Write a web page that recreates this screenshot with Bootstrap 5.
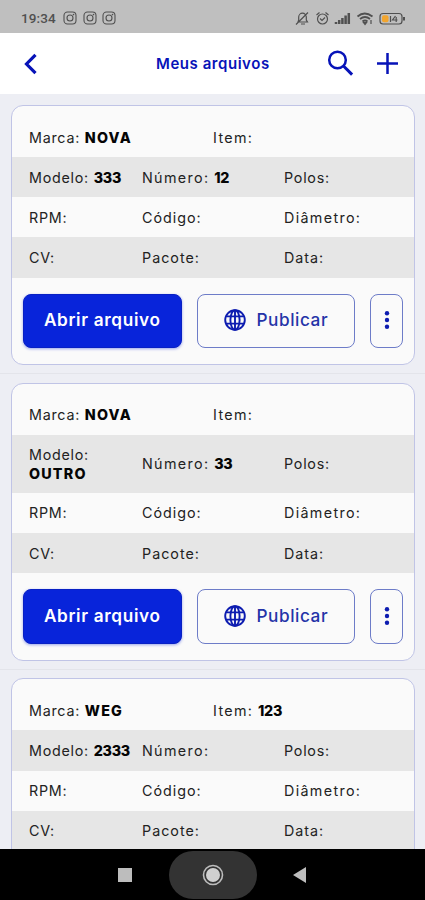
<!DOCTYPE html>
<html lang="pt-BR">
<head>
<meta charset="utf-8">
<meta name="viewport" content="width=device-width, initial-scale=1">
<title>Meus arquivos</title>
<link href="https://cdn.jsdelivr.net/npm/bootstrap@5.3.0/dist/css/bootstrap.min.css" rel="stylesheet">
<style>
body{font-family:Inter,"Open Sans",sans-serif;background:#edeef4;font-size:14.3px;letter-spacing:.75px;color:#222}
svg{display:block;flex:none}
.status{height:33px;background:#bfbfbf;padding:3px 18px 0 21px;color:#505050}
.clock{font:500 13.5px Roboto,sans-serif;letter-spacing:.1px;width:36px;margin-right:6px}
.gap-icons{gap:5.5px}
.topbar{height:61px;padding:0 27px 0 24px;color:#0713b8}
.topbar h1{font-size:15px;font-weight:600;letter-spacing:.55px;width:114px;margin:1px 0 0 119px;white-space:nowrap}
.tools{gap:23px}
.files{height:755px;padding-top:11px}
.file{margin:0 10px 0 11px;border:1px solid #c0c4e6;border-radius:12px;background:#fafafa;padding-top:11px}
.file:last-child{padding-bottom:86px}
.rule{height:1px;background:#e3e4ea;margin-top:8px}
.rule + .file{margin-top:8.600px}
.line2,.line3{display:grid;align-items:center;min-height:40.2px;line-height:19px;padding:0 16px 0 17px}
.line2{grid-template-columns:184px 1fr;min-height:40px}
.line3{grid-template-columns:113px 142px 1fr}
.line3 > div{white-space:nowrap}
.wide{letter-spacing:1px}
.wider{letter-spacing:1.35px}
.file b{font-weight:800;color:#050505;letter-spacing:1.2px}
.file b.digits{letter-spacing:-.3px}
.shade{background:#e6e6e6}
.tall{min-height:58.2px}
.actions{padding:16px 11px 16px;gap:15px}
.actions .btn{height:54.5px;border-radius:8px;font-size:17.2px;letter-spacing:.55px;padding:0 0 1px;white-space:nowrap;border:1px solid #6d7cc8;color:#2433a8}
.actions .open{width:159px;background:#0824da;border-color:#0820c4;color:#fff;font-weight:600;letter-spacing:.65px;box-shadow:0 1px 3px #0824da66}
.actions .publish{width:159px;gap:11px;font-weight:500}
.actions .more{width:33px}
.actions .btn svg{color:#0d1cb0}
.navkeys{height:51px;background:#000;color:#bdbdbd;padding-right:2px}
.home{width:88px;height:48px;border-radius:24px;background:#333;margin:0 36px 0 37px}
</style>
<script src="https://cdn.jsdelivr.net/npm/bootstrap@5.3.0/dist/js/bootstrap.bundle.min.js"></script>
</head>
<body class="vh-100 overflow-hidden d-flex flex-column">
<svg width="0" height="0" class="position-absolute">
<symbol id="insta" viewBox="0 0 14 14"><g fill="none" stroke="currentColor" stroke-width="1.1"><rect x="1" y="1" width="12" height="12" rx="3.5"/><circle cx="7" cy="7" r="3"/></g><circle cx="10.5" cy="3.6" r=".8" fill="currentColor"/></symbol>
<symbol id="globe" viewBox="0 0 22 22"><g fill="none" stroke="currentColor" stroke-width="1.9"><circle cx="11" cy="11" r="9.8"/><ellipse cx="11" cy="11" rx="4.6" ry="9.8"/><path d="M11 1v20M2 7.4h18M2 14.6h18"/></g></symbol>
<symbol id="dots" viewBox="0 0 6 20"><g fill="currentColor"><circle cx="3" cy="3.2" r="2.2"/><circle cx="3" cy="10" r="2.2"/><circle cx="3" cy="16.8" r="2.2"/></g></symbol>
</svg>

<div class="status d-flex align-items-center flex-shrink-0">
<span class="clock">19:34</span>
<div class="gap-icons d-flex">
<svg width="14" height="14"><use href="#insta"/></svg>
<svg width="14" height="14"><use href="#insta"/></svg>
<svg width="14" height="14"><use href="#insta"/></svg>
</div>
<svg class="ms-auto" width="112" height="17" viewBox="0 0 112 17" fill="none" stroke="currentColor" stroke-width="1.2">
<path d="M3 12h9.5l-1.2-2V7a3.8 3.8 0 0 0-7.6 0v3zM6 14h4M1 14.5 13 2.5"/>
<circle cx="27.500" cy="9" r="5"/><path d="M25 8.500l2 2 3-3M21.500 5l3-2.500M33.500 5l-3-2.500"/>
<path d="M41 14v-2M44.200 14v-4M47.400 14V8M50.600 14V5.500M53.800 14V3" stroke-width="2.500"/>
<path d="M62.500 6.500q7-6 15 0M65 9q5-4 10 0M67.500 11.500q2.500-2 5 0" stroke-width="1.800"/><path d="M70 14.500l-1.500-2h3z" fill="currentColor"/><path d="M76 10v4"/>
<rect x="85" y="3.500" width="22" height="10.500" rx="3"/><path d="M109 7v3.500" stroke-width="2"/><rect x="87" y="5.200" width="6.500" height="7" rx="2" fill="#f2a52e" stroke="none"/><path d="M95.500 6v6M100.500 6l-3 4h5M101.200 7v5" stroke-width="1.200"/>
</svg>
</div>

<header class="topbar bg-white d-flex align-items-center flex-shrink-0">
<svg width="13" height="22" viewBox="0 0 13 22" fill="none" stroke="currentColor" stroke-width="3.200"><path d="M11.500 1.800 2.500 11l9 9.200"/></svg>
<h1>Meus arquivos</h1>
<div class="tools d-flex align-items-center ms-auto">
<svg width="27" height="27" viewBox="0 0 27 27" fill="none" stroke="currentColor" stroke-width="2.500"><circle cx="10.500" cy="10" r="8.300"/><path d="m16.500 16 8.600 8.600" stroke-width="3"/></svg>
<svg width="21" height="21" viewBox="0 0 21 21" stroke="currentColor" stroke-width="2.500"><path d="M10.500 0v21M0 10.500h21"/></svg>
</div>
</header>

<main class="files overflow-hidden flex-shrink-0">
<section class="file">
<div class="line2"><div>Marca: <b>NOVA</b></div><div class="wider">Item:</div></div>
<div class="line3 shade"><div>Modelo: <b class="digits">333</b></div><div><span class="wider">Número:</span> <b class="digits">12</b></div><div>Polos:</div></div>
<div class="line3"><div>RPM:</div><div class="wide">Código:</div><div class="wider">Diâmetro:</div></div>
<div class="line3 shade"><div>CV:</div><div class="wide">Pacote:</div><div class="wide">Data:</div></div>
<div class="actions d-flex"><button class="btn open">Abrir arquivo</button><button class="btn publish d-flex align-items-center justify-content-center"><svg width="22" height="22"><use href="#globe"/></svg>Publicar</button><button class="btn more d-flex align-items-center justify-content-center"><svg width="6" height="20"><use href="#dots"/></svg></button></div>
</section>
<div class="rule"></div>
<section class="file">
<div class="line2"><div>Marca: <b>NOVA</b></div><div class="wider">Item:</div></div>
<div class="line3 shade tall"><div>Modelo:<br><b>OUTRO</b></div><div><span class="wider">Número:</span> <b class="digits">33</b></div><div>Polos:</div></div>
<div class="line3"><div>RPM:</div><div class="wide">Código:</div><div class="wider">Diâmetro:</div></div>
<div class="line3 shade"><div>CV:</div><div class="wide">Pacote:</div><div class="wide">Data:</div></div>
<div class="actions d-flex"><button class="btn open">Abrir arquivo</button><button class="btn publish d-flex align-items-center justify-content-center"><svg width="22" height="22"><use href="#globe"/></svg>Publicar</button><button class="btn more d-flex align-items-center justify-content-center"><svg width="6" height="20"><use href="#dots"/></svg></button></div>
</section>
<div class="rule"></div>
<section class="file">
<div class="line2"><div>Marca: <b>WEG</b></div><div><span class="wider">Item:</span> <b class="digits">123</b></div></div>
<div class="line3 shade"><div>Modelo: <b class="digits">2333</b></div><div class="wider">Número:</div><div>Polos:</div></div>
<div class="line3"><div>RPM:</div><div class="wide">Código:</div><div class="wider">Diâmetro:</div></div>
<div class="line3 shade"><div>CV:</div><div class="wide">Pacote:</div><div class="wide">Data:</div></div>
</section>
</main>

<nav class="navkeys d-flex align-items-center justify-content-center flex-shrink-0">
<svg width="14" height="14"><rect width="14" height="14" fill="currentColor"/></svg>
<div class="home d-flex align-items-center justify-content-center"><svg width="22" height="22"><circle cx="11" cy="11" r="9.500" fill="none" stroke="currentColor" stroke-width="1.600"/><circle cx="11" cy="11" r="7" fill="#d0d0d0"/></svg></div>
<svg width="13" height="16"><path d="M0 8 13 0v16z" fill="currentColor"/></svg>
</nav>
</body>
</html>
